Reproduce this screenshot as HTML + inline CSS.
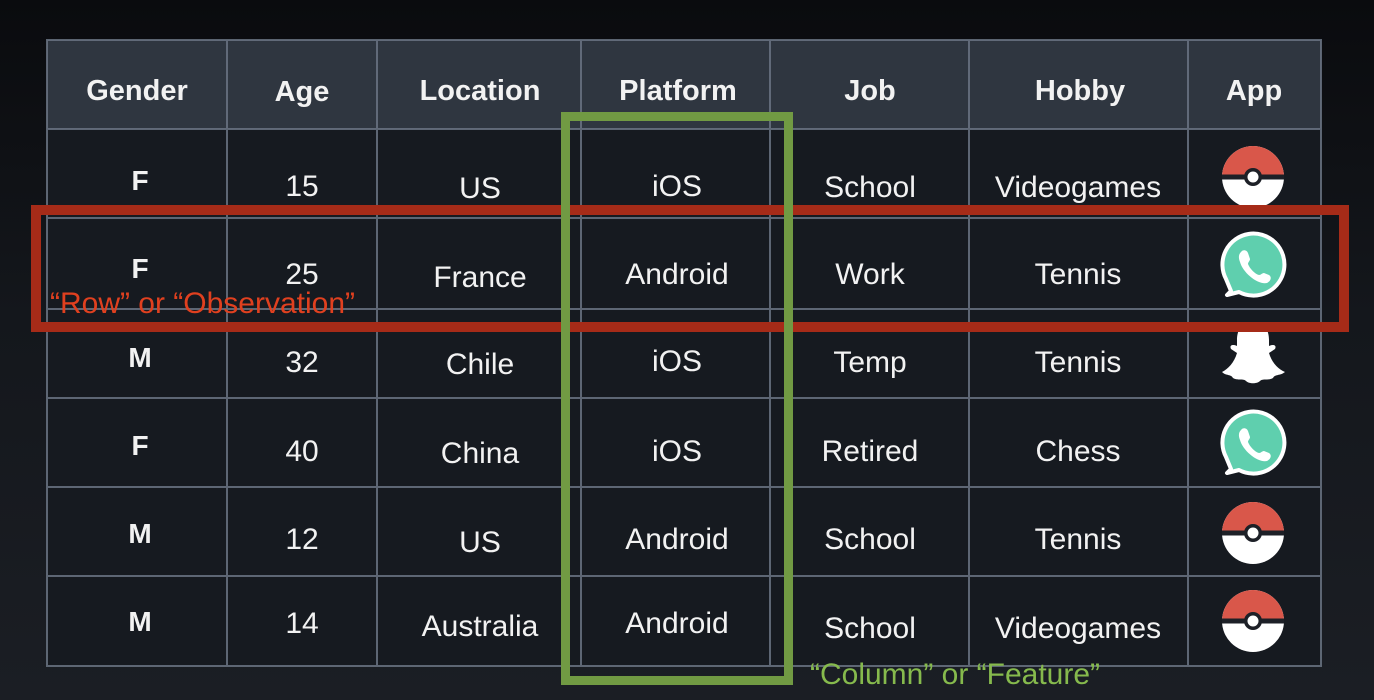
<!DOCTYPE html>
<html><head><meta charset="utf-8"><style>
html,body{margin:0;padding:0;}
body{width:1374px;height:700px;overflow:hidden;background:linear-gradient(180deg,#0a0b0e 0%,#14171c 45%,#1b1e24 100%);position:relative;font-family:"Liberation Sans","DejaVu Sans",sans-serif;}
svg{position:absolute;left:0;top:0;}
</style></head><body>
<svg width="1374" height="700" viewBox="0 0 1374 700">
<defs>
<g id="pb">
<circle r="31" fill="#fff"/>
<path d="M-31 0 A31 31 0 0 1 31 0 Z" fill="#d9574a"/>
<rect x="-31" y="-2.5" width="62" height="5" fill="#1d2027"/>
<circle r="9" fill="#1d2027"/><circle r="5.5" fill="#fff"/>
</g>
<g id="wa">
<path d="M-22 26 L-26 30 L-14 27 A31 31 0 1 0 -27 14 Z" fill="#5fcfae" stroke="#fff" stroke-width="4" stroke-linejoin="round"/>
<path d="M-12 -13 C-10 -16 -6 -15 -5 -12 L-3 -6 C-3 -4 -5 -3 -5 -1 C-3 4 2 9 6 10 C8 10 9 8 11 8 L16 10 C19 12 18 16 14 18 C5 20 -10 8 -13 -3 C-15 -8 -14 -11 -12 -13 Z" fill="#fff"/>
</g>
</defs>
<rect x="47" y="40" width="1274" height="89" fill="#2f3640"/>
<rect x="47" y="129" width="1274" height="537" fill="#161a20"/>
<g stroke="#6a7483" stroke-width="2" fill="none" opacity="0.85">
<rect x="47" y="40" width="1274" height="626"/>
<line x1="227" y1="40" x2="227" y2="666"/><line x1="377" y1="40" x2="377" y2="666"/>
<line x1="581" y1="40" x2="581" y2="666"/><line x1="770" y1="40" x2="770" y2="666"/>
<line x1="969" y1="40" x2="969" y2="666"/><line x1="1188" y1="40" x2="1188" y2="666"/>
<line x1="47" y1="129" x2="1321" y2="129"/><line x1="47" y1="218" x2="1321" y2="218"/>
<line x1="47" y1="309" x2="1321" y2="309"/><line x1="47" y1="398" x2="1321" y2="398"/>
<line x1="47" y1="487" x2="1321" y2="487"/><line x1="47" y1="576" x2="1321" y2="576"/>
</g>
<g fill="#f2f2f2" font-size="30" text-anchor="middle" font-family="Liberation Sans, sans-serif">
<g font-weight="bold" font-size="29">
<text x="137" y="100">Gender</text><text x="302" y="101">Age</text><text x="480" y="100">Location</text>
<text x="678" y="100">Platform</text><text x="870" y="100">Job</text><text x="1080" y="100">Hobby</text><text x="1254" y="100">App</text>
</g>
<g font-weight="bold" font-size="28"><text x="140" y="190">F</text><text x="140" y="278">F</text><text x="140" y="367">M</text><text x="140" y="455">F</text><text x="140" y="543">M</text><text x="140" y="631">M</text></g>
<text x="302" y="196">15</text><text x="480" y="198">US</text><text x="677" y="196">iOS</text><text x="870" y="197">School</text><text x="1078" y="197">Videogames</text>
<text x="302" y="284">25</text><text x="480" y="287">France</text><text x="677" y="284">Android</text><text x="870" y="284">Work</text><text x="1078" y="284">Tennis</text>
<text x="302" y="372">32</text><text x="480" y="374">Chile</text><text x="677" y="371">iOS</text><text x="870" y="372">Temp</text><text x="1078" y="372">Tennis</text>
<text x="302" y="461">40</text><text x="480" y="463">China</text><text x="677" y="461">iOS</text><text x="870" y="461">Retired</text><text x="1078" y="461">Chess</text>
<text x="302" y="549">12</text><text x="480" y="552">US</text><text x="677" y="549">Android</text><text x="870" y="549">School</text><text x="1078" y="549">Tennis</text>
<text x="302" y="633">14</text><text x="480" y="636">Australia</text><text x="677" y="633">Android</text><text x="870" y="638">School</text><text x="1078" y="638">Videogames</text>
</g>
<use href="#pb" x="1253" y="177"/>
<use href="#wa" x="1253" y="265"/>
<path d="M1253 322 C1240 322 1237 332 1237 340 L1237 346 C1233 344 1229 345 1231 349 L1237 353 C1234 363 1228 369 1222 372 C1226 376 1231 374 1233 378 C1238 381 1243 378 1246 381 C1249 384 1257 384 1260 381 C1263 378 1268 381 1273 378 C1275 374 1280 376 1285 372 C1278 369 1272 363 1269 353 L1275 349 C1277 345 1273 344 1269 346 L1269 340 C1269 332 1266 322 1253 322 Z" fill="#fff"/>
<use href="#wa" x="1253" y="443"/>
<use href="#pb" x="1253" y="533"/>
<use href="#pb" x="1253" y="621"/>
<rect x="36" y="210" width="1308" height="117" fill="none" stroke="#a62b18" stroke-width="10"/>
<rect x="565.5" y="116.5" width="223" height="564" fill="none" stroke="#719a43" stroke-width="9"/>
<text x="50" y="313" fill="#e0401f" font-size="30" textLength="305" lengthAdjust="spacingAndGlyphs" font-family="Liberation Sans, sans-serif">“Row” or “Observation”</text>
<text x="810" y="684" fill="#86ba4d" font-size="30" textLength="290" lengthAdjust="spacingAndGlyphs" font-family="Liberation Sans, sans-serif">“Column” or “Feature”</text>
</svg>
</body></html>
